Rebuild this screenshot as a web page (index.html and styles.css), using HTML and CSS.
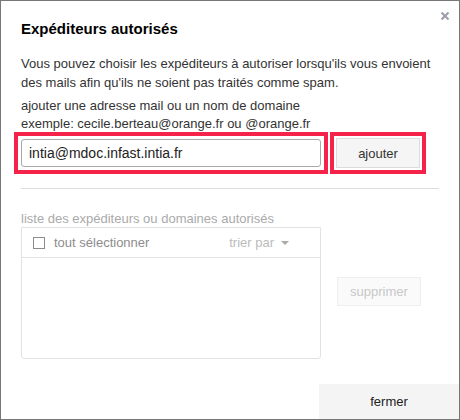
FILE: index.html
```html
<!DOCTYPE html>
<html lang="fr">
<head>
    <meta charset="UTF-8">
    <meta name="viewport" content="width=device-width, initial-scale=1.0">
    <title>Expéditeurs autorisés</title>
    <link rel="stylesheet" href="styles.css">
</head>
<body>
    <div class="dialog">
        <button class="close" aria-label="fermer">
            <svg width="8" height="8" viewBox="0 0 8 8"><path d="M0.5 0.5 L7.5 7.5 M7.5 0.5 L0.5 7.5" stroke="#9a9ea6" stroke-width="2"/></svg>
        </button>
        <div class="content">
            <h1 class="title">Expéditeurs autorisés</h1>
            <p class="intro">Vous pouvez choisir les expéditeurs à autoriser lorsqu'ils vous envoient des mails afin qu'ils ne soient pas traités comme spam.</p>
            <p class="hint">ajouter une adresse mail ou un nom de domaine<br>exemple: cecile.berteau@orange.fr ou @orange.fr</p>
            <div class="add-row">
                <div class="mark">
                    <input type="text" class="field" value="intia@mdoc.infast.intia.fr">
                </div>
                <div class="mark mark-btn">
                    <button class="btn btn-add">ajouter</button>
                </div>
            </div>
            <hr class="sep">
            <div class="list-label">liste des expéditeurs ou domaines autorisés</div>
            <div class="list-row">
                <div class="list-box">
                    <div class="list-head">
                        <span class="check"></span>
                        <span class="select-all">tout sélectionner</span>
                        <span class="sort">trier par</span>
                        <span class="caret"></span>
                    </div>
                </div>
                <button class="btn btn-remove" disabled>supprimer</button>
            </div>
        </div>
        <div class="footer">
            <button class="footer-btn">fermer</button>
        </div>
    </div>
</body>
</html>
```

FILE: styles.css
```css
body {
    margin: 0;
    font-family: "Liberation Sans", Arial, sans-serif;
    background: #fff;
}
.dialog {
    position: relative;
    width: 460px;
    height: 420px;
    box-sizing: border-box;
    border: 1px solid #777;
    display: flex;
    flex-direction: column;
    background: #fff;
}
.close {
    position: absolute;
    top: 11px;
    right: 10px;
    padding: 0;
    border: none;
    background: none;
    line-height: 0;
    cursor: pointer;
}
.content {
    padding: 19px 20px 0 20px;
}
.title {
    margin: 0;
    font-size: 15px;
    line-height: 17px;
    font-weight: bold;
    color: #000;
}
.intro {
    margin: 17px 0 0;
    font-size: 13px;
    line-height: 19px;
    color: #333;
}
.hint {
    margin: 5px 0 0;
    font-size: 13px;
    line-height: 18px;
    color: #333;
}
.add-row {
    margin-top: 5px;
    display: flex;
    align-items: center;
    height: 30px;
}
/* red annotation frames */
.mark {
    display: flex;
    outline: 4px solid #f5224a;
    outline-offset: 3px;
}
.mark-btn {
    margin-left: 15px;
    outline-offset: 2px;
}
.field {
    width: 300px;
    height: 28px;
    box-sizing: border-box;
    border: 1px solid #a9a9a9;
    border-radius: 3px;
    padding: 0 7px;
    margin: 0;
    font-family: inherit;
    font-size: 14px;
    color: #222;
}
.btn {
    width: 84px;
    box-sizing: border-box;
    font-family: inherit;
    font-size: 13px;
    padding: 0;
    cursor: pointer;
}
.btn-add {
    height: 30px;
    border: 1px solid #dcdcdc;
    background: #f5f5f5;
    color: #333;
}
.sep {
    margin: 20px 0 0;
    height: 0;
    border: none;
    border-top: 1px solid #ddd;
}
.list-label {
    margin-top: 21px;
    font-size: 13px;
    line-height: 17px;
    color: #aaa;
}
.list-row {
    display: flex;
    align-items: flex-start;
}
.list-box {
    width: 300px;
    height: 132px;
    box-sizing: border-box;
    border: 1px solid #e2e2e2;
    border-radius: 0 0 3px 3px;
}
.list-head {
    height: 30px;
    box-sizing: border-box;
    border-bottom: 1px solid #e2e2e2;
    display: flex;
    align-items: center;
    padding: 0 31px 0 11px;
    font-size: 13px;
}
.check {
    width: 12px;
    height: 12px;
    box-sizing: border-box;
    border: 1px solid #8c8c8c;
    margin-right: 9px;
}
.select-all {
    color: #8c8c8c;
}
.sort {
    margin-left: auto;
    color: #bbb;
}
.caret {
    margin-left: 7px;
    width: 0;
    height: 0;
    border-left: 4px solid transparent;
    border-right: 4px solid transparent;
    border-top: 4px solid #aaa;
}
.btn-remove {
    height: 29px;
    margin: 50px 0 0 16px;
    border: 1px solid #eee;
    background: #fafafa;
    color: #c8c8c8;
    cursor: default;
}
.footer {
    margin-top: auto;
    align-self: flex-end;
}
.footer-btn {
    display: block;
    width: 140px;
    height: 35px;
    border: none;
    padding: 0;
    background: #f4f4f4;
    font-family: inherit;
    font-size: 13px;
    color: #222;
    cursor: pointer;
}
```
